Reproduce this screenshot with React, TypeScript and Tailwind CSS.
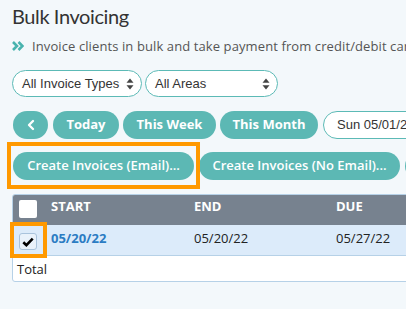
import { ChevronLeft } from "lucide-react";

const teal = "bg-[#5cb8b4]";

function SelectBox({ label, width }: { label: string; width: string }) {
  return (
    <div className={`${width} h-[27px] flex items-center justify-between rounded-full border border-[#5cbab6] bg-white pl-[9px] pr-[7px] font-['Liberation_Sans',Arial,sans-serif] text-[13px] text-[#333]`}>
      <span>{label}</span>
      <svg width="8" height="12" viewBox="0 0 8 12" className="text-[#444]">
        <path d="M4 0.5 L7.5 4.8 H0.5 Z" fill="currentColor" />
        <path d="M4 11.5 L7.5 7.2 H0.5 Z" fill="currentColor" />
      </svg>
    </div>
  );
}

function PillButton({ children, width }: { children: React.ReactNode; width: string }) {
  return (
    <button className={`${width} ${teal} h-[28px] shrink-0 rounded-full text-[13px] font-bold text-white flex items-center justify-center`}>
      {children}
    </button>
  );
}

export default function App() {
  return (
    <div className="relative h-[309px] w-full overflow-hidden bg-[#f3f8fb] font-['Open_Sans',sans-serif] text-[#333]">
      <div className="pl-[12px]">
        <h1 className="font-['Lato',sans-serif] text-[20px] leading-[32px] tracking-[-0.4px] text-[#333]">Bulk Invoicing</h1>

        <div className="mt-[2px] flex items-center whitespace-nowrap text-[13px] leading-[24px] tracking-[0.1px] text-[#555]">
          <svg width="12" height="10" viewBox="0 0 12 10" className="mr-[8px] shrink-0">
            <path d="M1 1 L5 5 L1 9" stroke="#48b3ae" strokeWidth="2.6" fill="none" />
            <path d="M6.5 1 L10.5 5 L6.5 9" stroke="#48b3ae" strokeWidth="2.6" fill="none" />
          </svg>
          Invoice clients in bulk and take payment from credit/debit cards
        </div>

        <div className="mt-[12px] flex gap-[3px]">
          <SelectBox label="All Invoice Types" width="w-[130px]" />
          <SelectBox label="All Areas" width="w-[133px]" />
        </div>

        <div className="ml-[1px] mt-[14px] flex gap-[4px] whitespace-nowrap">
          <PillButton width="w-[35px] mr-[1px]">
            <ChevronLeft size={16} strokeWidth={3.5} />
          </PillButton>
          <PillButton width="w-[66px]">Today</PillButton>
          <PillButton width="w-[93px]">This Week</PillButton>
          <PillButton width="w-[98px] mr-[1px]">This Month</PillButton>
          <div className="h-[28px] w-[140px] shrink-0 rounded-full border border-[#5cbab6] bg-white pl-[13px] font-['Liberation_Sans',Arial,sans-serif] text-[13px] leading-[26px] text-[#333]">
            Sun 05/01/22
          </div>
        </div>

        <div className="ml-[1px] mt-[13px] flex gap-[5px] whitespace-nowrap">
          <button className={`${teal} h-[28px] w-[181px] shrink-0 rounded-full text-[13px] font-semibold text-white`}>
            Create Invoices (Email)...
          </button>
          <button className={`${teal} h-[28px] w-[201px] shrink-0 rounded-full text-[13px] font-semibold text-white`}>
            Create Invoices (No Email)...
          </button>
          <button className={`${teal} h-[28px] w-[120px] shrink-0 rounded-full text-[13px] font-semibold text-white`}>
            Print
          </button>
        </div>

        <div className="mt-[14px] w-[620px] overflow-hidden rounded-[3px] border border-[#b6d1e7] bg-white text-[13px] leading-[18px]">
          <div className="flex h-[30px] bg-[#77828f] font-bold text-white">
            <div className="w-[38px] shrink-0 pl-[6px] pt-[5px]">
              <div className="h-[18px] w-[18px] rounded-[2px] bg-white" />
            </div>
            <div className="w-[143px] shrink-0 pt-[2px]">START</div>
            <div className="w-[142px] shrink-0 pt-[2px]">END</div>
            <div className="flex-1 pt-[2px]">DUE</div>
          </div>
          <div className="flex h-[31px] border-b border-[#b6d1e7] bg-[#dcebfa]">
            <div className="w-[38px] shrink-0 pl-[6px] pt-[8px]">
              <div className="flex h-[17px] w-[18px] items-center justify-center rounded-[3px] border border-[#a9c3dc] bg-[#e9f2fb]">
                <svg width="12" height="10" viewBox="0 0 12 10">
                  <path d="M1.3 5.2 L4.4 8.2 L10.7 1.6" stroke="#000" strokeWidth="2.6" fill="none" />
                </svg>
              </div>
            </div>
            <div className="w-[143px] shrink-0 pt-[4px] font-bold text-[#2b7cc3]">05/20/22</div>
            <div className="w-[142px] shrink-0 pt-[4px] text-[#222]">05/20/22</div>
            <div className="flex-1 pt-[4px] text-[#222]">05/27/22</div>
          </div>
          <div className="h-[25px] pl-[4px] pt-[4px] text-[#222]">Total</div>
        </div>
      </div>

      {/* annotation highlights */}
      <div className="pointer-events-none absolute left-[7px] top-[142px] h-[47px] w-[193px] border-4 border-[#ff9900]" />
      <div className="pointer-events-none absolute left-[10px] top-[222px] h-[36px] w-[37px] border-4 border-[#ff9900]" />
    </div>
  );
}
